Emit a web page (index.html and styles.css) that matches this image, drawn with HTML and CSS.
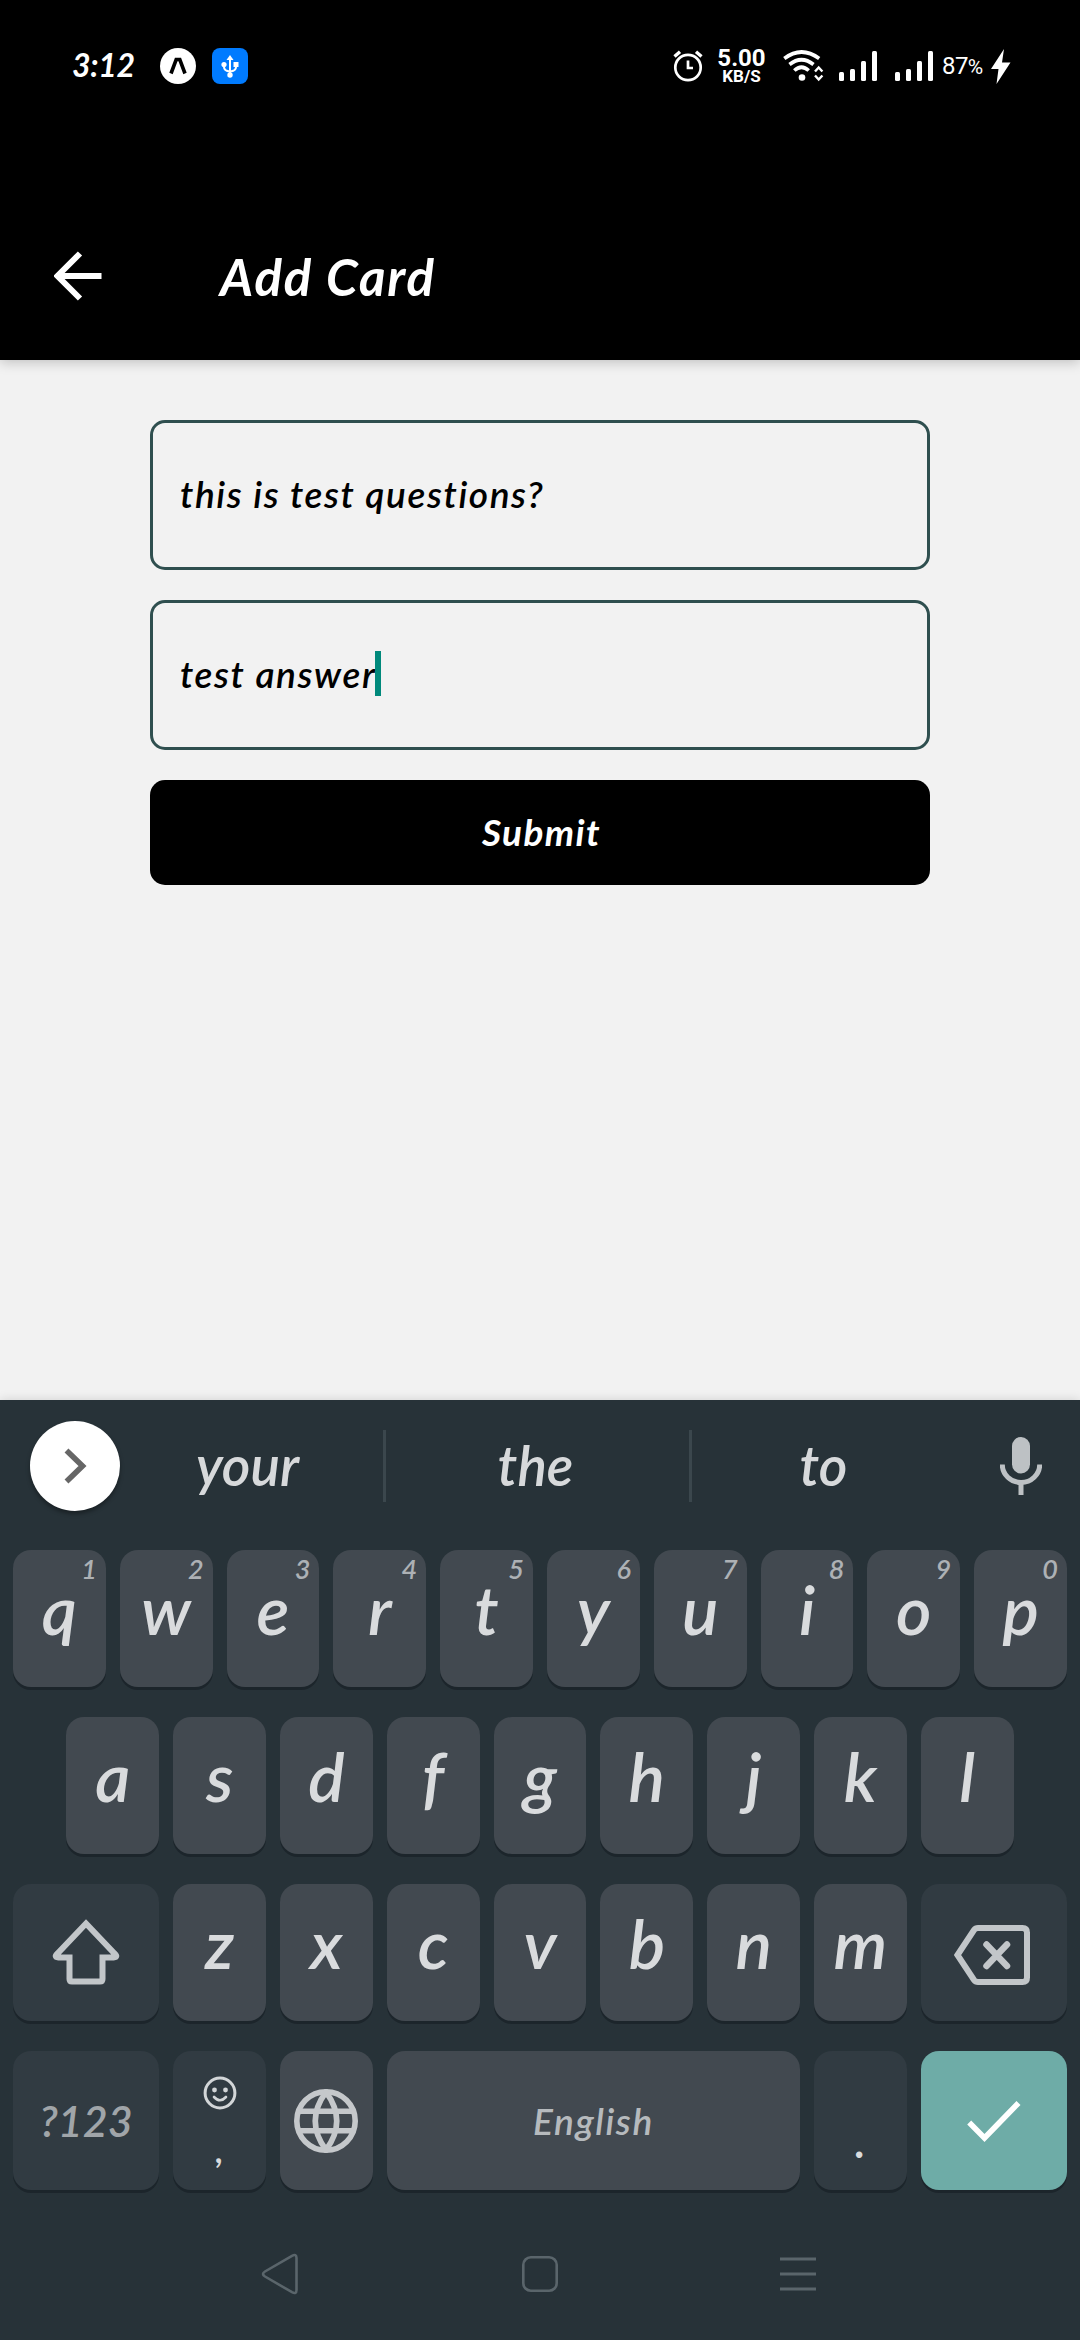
FILE: index.html
```html
<!DOCTYPE html>
<html lang="en">
<head>
<meta charset="utf-8">
<title>Add Card</title>
<link rel="stylesheet" href="styles.css">
</head>
<body>
<div class="screen">
  <div class="status-bar">
    <span class="clock">3:12</span>
    <svg class="expo" width="36" height="36" viewBox="0 0 36 36"><circle cx="18" cy="18" r="18" fill="#fff"/><path d="M11 25.500L16.200 11.500H19.800L25 25.500" fill="none" stroke="#000" stroke-width="3.600"/></svg>
    <svg class="usb" width="36" height="36" viewBox="0 0 36 36"><rect width="36" height="36" rx="8" fill="#007bff"/><g fill="none" stroke="#fff" stroke-width="2"><path d="M18 10V27M12 17v2q0 4 6 4.500q6-.5 6-4.500v-2"/></g><path d="M18 7l3.500 5h-7z" fill="#fff"/><circle cx="12" cy="16.500" r="2.600" fill="#fff"/><path d="M21.500 14h5v5h-5z" fill="#fff"/><circle cx="18" cy="27" r="2.700" fill="#fff"/></svg>
    <div class="indicators">
      <svg class="alarm" width="30" height="34" viewBox="0 0 30 34"><g fill="none" stroke="#fff" stroke-width="2.700"><circle cx="15" cy="18.500" r="12.700"/><path d="M15 11.500V19h5"/><path d="M1.500 7.500L7 2.800M28.500 7.500L23 2.800" stroke-width="3.400"/></g></svg>
      <div class="speed"><span class="speed-value">5.00</span><span class="speed-unit">KB/S</span></div>
      <svg class="wifi" width="42" height="32" viewBox="0 0 42 32"><g fill="none" stroke="#fff" stroke-width="3.700"><path d="M1.300 8.500Q18.500-4.500 36.200 8.500"/><path d="M6.500 14.500Q18.500 5 30.500 14.500"/><path d="M11.300 20.500Q18.500 14 25.700 20.500"/></g><circle cx="19" cy="27.500" r="3.300" fill="#fff"/><path d="M32 21.500l3.700-4 3.700 4M32 25.500l3.700 4 3.700-4" fill="none" stroke="#fff" stroke-width="2.400"/></svg>
      <svg class="signal" width="38" height="30" viewBox="0 0 38 30" fill="#fff"><rect y="21" width="5" height="9" rx="1.500"/><rect x="11" y="18" width="5" height="12" rx="1.500"/><rect x="22" y="10" width="5" height="20" rx="1.500"/><rect x="33" width="5" height="30" rx="1.500"/></svg>
      <svg class="signal" width="38" height="30" viewBox="0 0 38 30" fill="#fff"><rect y="21" width="5" height="9" rx="1.500"/><rect x="11" y="18" width="5" height="12" rx="1.500"/><rect x="22" y="10" width="5" height="20" rx="1.500"/><rect x="33" width="5" height="30" rx="1.500"/></svg>
      <span class="battery">87<span class="percent">%</span></span>
      <svg class="bolt" width="20" height="35" viewBox="0 0 20 35"><path d="M13 0L0 20h7.500L5.500 35L19.500 13.500H11z" fill="#fff"/></svg>
    </div>
  </div>
  <header class="app-bar">
    <svg class="back" width="48" height="50" viewBox="0 0 48 50"><path d="M26 2.500L3.500 25L26 47.500M3.500 25H47.500" fill="none" stroke="#fff" stroke-width="6"/></svg>
    <h1 class="title">Add Card</h1>
  </header>
  <main class="content">
    <div class="field"><span class="question">this is test questions?</span></div>
    <div class="field"><span class="answer">test answer</span><span class="caret"></span></div>
    <div class="submit"><span>Submit</span></div>
  </main>
  <section class="keyboard">
    <div class="suggestions">
      <div class="expand"><svg width="24" height="36" viewBox="0 0 24 36"><path d="M2.500 2.500L18.500 18L2.500 33.500" fill="none" stroke="#666" stroke-width="5.600"/></svg></div>
      <span class="word word-first">your</span>
      <span class="divider"></span>
      <span class="word word-mid">the</span>
      <span class="divider"></span>
      <span class="word word-last">to</span>
      <svg class="mic" width="42" height="58" viewBox="0 0 42 58"><rect x="12" width="18" height="36.500" rx="9" fill="#bdc1c4"/><path d="M2.300 27.500a18.700 18 0 0 0 37.400 0M21 46V58" fill="none" stroke="#bdc1c4" stroke-width="5"/></svg>
    </div>
    <div class="keys">
      <div class="row">
        <div class="key">q<span class="hint">1</span></div><div class="key">w<span class="hint">2</span></div><div class="key">e<span class="hint">3</span></div><div class="key">r<span class="hint">4</span></div><div class="key">t<span class="hint">5</span></div><div class="key">y<span class="hint">6</span></div><div class="key">u<span class="hint">7</span></div><div class="key">i<span class="hint">8</span></div><div class="key">o<span class="hint">9</span></div><div class="key">p<span class="hint">0</span></div>
      </div>
      <div class="row row-home">
        <div class="key">a</div><div class="key">s</div><div class="key">d</div><div class="key">f</div><div class="key">g</div><div class="key">h</div><div class="key">j</div><div class="key">k</div><div class="key">l</div>
      </div>
      <div class="row">
        <div class="key key-dark key-icon key-wide"><svg class="shift" width="68" height="66" viewBox="0 0 68 66"><path d="M34 4.500L62.500 34.500Q66.500 38 61.500 38.500H50.500V60Q50.500 62.500 48 62.500H20Q17.500 62.500 17.500 60V38.500H6.500Q1.500 38 5.500 34.500z" fill="none" stroke="#c2c6c9" stroke-width="6"/></svg></div>
        <div class="key">z</div><div class="key">x</div><div class="key">c</div><div class="key">v</div><div class="key">b</div><div class="key">n</div><div class="key">m</div>
        <div class="key key-dark key-icon key-wide"><svg class="backspace" width="76" height="60" viewBox="0 0 76 60"><path d="M24 3H68.500Q73 3 73 7.500V52.500Q73 57 68.500 57H24Q21.500 57 20 55L3.500 30L20 5Q21.500 3 24 3z" fill="none" stroke="#c2c6c9" stroke-width="6"/><path d="M32.500 19.500L53 41M53 19.500L32.500 41" stroke="#c2c6c9" stroke-width="6.500" stroke-linecap="round"/></svg></div>
      </div>
      <div class="row row-bottom">
        <div class="key key-dark key-icon key-wide symbols">?123</div>
        <div class="key key-dark comma"><svg width="34" height="34" viewBox="0 0 34 34"><circle cx="17" cy="17" r="14.900" fill="none" stroke="#d3d6d8" stroke-width="3"/><circle cx="11.500" cy="14" r="2.400" fill="#d3d6d8"/><circle cx="22.500" cy="14" r="2.400" fill="#d3d6d8"/><path d="M11 21Q17 27.500 23 21" fill="none" stroke="#d3d6d8" stroke-width="2.600" stroke-linecap="round"/></svg><span>,</span></div>
        <div class="key key-icon"><svg width="64" height="64" viewBox="0 0 64 64"><g fill="none" stroke="#c5c8cb" stroke-width="5.600"><circle cx="32" cy="32" r="29.200"/><path d="M4 22.300H60M4 41.700H60"/><path d="M32 3Q10.500 32 32 61Q53.500 32 32 3z"/></g></svg></div>
        <div class="key key-icon space"><span>English</span></div>
        <div class="key key-dark period">.</div>
        <div class="key key-icon key-wide enter"><svg width="54" height="42" viewBox="0 0 54 42"><path d="M2.200 22.500L17.500 38L51.500 3" fill="none" stroke="#fff" stroke-width="5.600"/></svg></div>
      </div>
    </div>
    <nav class="nav-bar">
      <svg class="nav-back" width="38" height="42" viewBox="0 0 38 42"><path d="M31 2.800Q35.500 .5 35.500 5V37Q35.500 41.500 31 39.200L4 23.500Q0 21 4 18.500z" fill="none" stroke="#5a656b" stroke-width="2.600"/></svg>
      <svg width="36" height="36" viewBox="0 0 36 36"><rect x="1.300" y="1.300" width="33.400" height="33.400" rx="7.500" fill="none" stroke="#5a656b" stroke-width="2.600"/></svg>
      <svg width="36" height="34" viewBox="0 0 36 34"><path d="M0 2H36M0 17H36M0 32H36" stroke="#5a656b" stroke-width="3"/></svg>
    </nav>
  </section>
</div>
</body>
</html>
```
FILE: styles.css
```css
* { box-sizing: border-box; }
body { margin: 0; background: #f2f2f2; }
svg { display: block; flex: none; }

.screen {
  width: 1080px;
  height: 2340px;
  display: flex;
  flex-direction: column;
  overflow: hidden;
  font-family: Lato, "Open Sans", sans-serif;
  font-style: italic;
  font-weight: 600;
  font-variant-ligatures: none;
  background: #f2f2f2;
}

/* status bar */
.status-bar {
  height: 132px;
  padding-left: 72px;
  display: flex;
  align-items: center;
  background: #000;
  color: #fff;
}
.clock { width: 88px; font-size: 32px; line-height: 40px; font-weight: 700; letter-spacing: -.3px; padding-bottom: 3px; }
.usb { margin-left: 16px; }
.indicators {
  margin-left: auto;
  padding-right: 69px;
  display: flex;
  align-items: center;
  font-family: Roboto, sans-serif;
  font-style: normal;
}
.speed {
  width: 49px;
  margin: 0 17px 0 14px;
  display: flex;
  flex-direction: column;
  align-items: center;
  font-weight: 700;
}
.speed-value { font-size: 24px; line-height: 20px; }
.speed-unit { font-size: 17px; line-height: 17px; }
.wifi { margin-right: 14px; }
.signal { margin-right: 18px; }
.battery { width: 49px; margin-left: -9px; font-size: 24px; font-weight: 400; line-height: 30px; white-space: nowrap; letter-spacing: -.6px; }
.percent { font-size: 21px; }

/* app bar */
.app-bar {
  position: relative;
  height: 228px;
  padding: 60px 0 0 54px;
  display: flex;
  align-items: center;
  background: #000;
  color: #fff;
  box-shadow: 0 2px 12px rgba(0, 0, 0, .22);
}
.title { margin: 2px 0 0 118px; font-size: 51px; line-height: 64px; font-weight: 700; letter-spacing: 1.8px; }

/* form */
.content { height: 1040px; padding: 60px 150px 0; display: flex; flex-direction: column; gap: 30px; }
.field {
  height: 150px;
  padding: 0 27px 4px;
  display: flex;
  align-items: center;
  border: 3px solid #2f4f4f;
  border-radius: 15px;
  font-size: 37px;
  letter-spacing: 1.600px;
  color: #000;
}
.caret { width: 6px; height: 45px; margin-left: -1px; background: #00897b; }
.submit {
  height: 105px;
  padding: 0 0 3px 3px;
  display: flex;
  align-items: center;
  justify-content: center;
  border-radius: 15px;
  background: #000;
  color: #fff;
  font-size: 37px;
  font-weight: 700;
  letter-spacing: 1.400px;
}

/* keyboard */
.keyboard {
  position: relative;
  flex: 1;
  background: #273238;
  box-shadow: 0 0 10px rgba(0, 0, 0, .14);
}
.suggestions { height: 132px; margin-bottom: 18px; padding-left: 30px; display: flex; align-items: center; color: #d7d9db; }
.expand {
  width: 90px;
  height: 90px;
  padding-left: 2px;
  display: flex;
  align-items: center;
  justify-content: center;
  border-radius: 50%;
  background: #fff;
  box-shadow: 0 3px 4px rgba(0, 0, 0, .35);
}
.word { font-size: 55px; line-height: 66px; text-align: center; padding-bottom: 3px; }
.word-first { width: 263px; padding-right: 8px; }
.word-mid { width: 303px; padding-right: 4px; }
.word-last { width: 263px; margin-right: 45px; }
.divider { width: 3px; height: 72px; background: #3b474d; }

.keys { padding: 0 13px; display: flex; flex-direction: column; gap: 30px; }
.row { height: 137px; display: flex; gap: 14px; }
.row-home { padding: 0 53.400px; }
.row-bottom { height: 139px; }
.key {
  position: relative;
  flex: 0 0 92.800px;
  border-radius: 18px;
  background: #424950;
  box-shadow: 0 3px 0 #1c252b;
  color: #d9dbdd;
  font-size: 68px;
  line-height: 117px;
  text-align: center;
}
.hint { position: absolute; top: 4px; right: 9px; font-size: 27px; line-height: 30px; color: #adb1b5; }
.key-dark { background: #313b42; }
.key-icon { display: flex; align-items: center; justify-content: center; }
.key-wide { flex: 1; }
.shift { margin-top: -1px; }
.backspace { margin: 4px 0 0 -3px; }
.symbols { font-size: 43px; color: #a0a5a9; line-height: 50px; }
.comma { display: flex; flex-direction: column; align-items: center; padding-top: 25px; }
.comma span { font-size: 36px; line-height: 44px; margin-top: 17px; }
.space { flex: 0 0 413.200px; font-size: 37px; line-height: 44px; letter-spacing: 1.600px; color: #b6babd; }
.period { font-size: 46px; line-height: 56px; padding-top: 62px; }
.enter { background: #6eaca7; }

.nav-bar { height: 150px; padding: 18px 264px 0 261px; display: flex; align-items: center; justify-content: space-between; }
```
